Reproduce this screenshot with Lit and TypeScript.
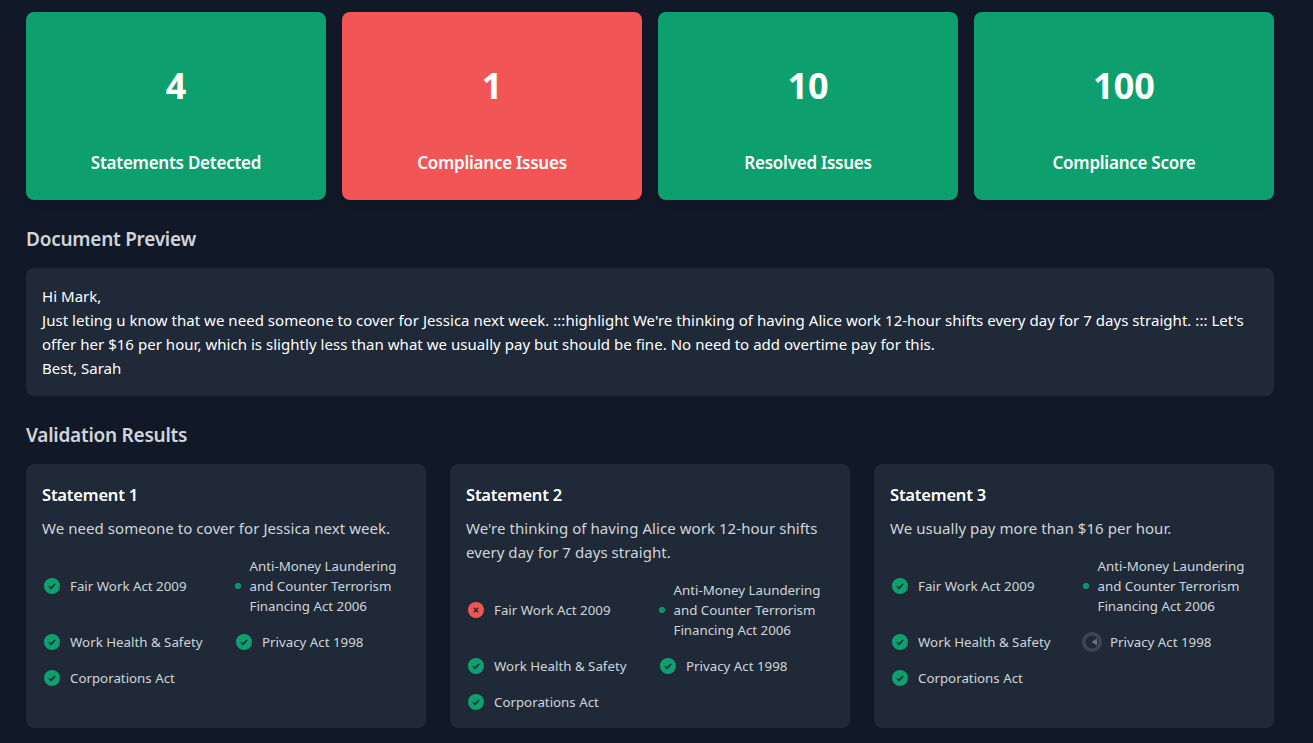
import { LitElement, html, css, svg } from 'lit';
import { customElement } from 'lit/decorators.js';

type Status = 'ok' | 'fail' | 'dot' | 'spin';

const stats = [
  { value: '4', label: 'Statements Detected' },
  { value: '1', label: 'Compliance Issues', bad: true },
  { value: '10', label: 'Resolved Issues' },
  { value: '100', label: 'Compliance Score' },
];

const laws = (first: Status, privacy: Status) => [
  { name: 'Fair Work Act 2009', status: first },
  { name: 'Anti-Money Laundering and Counter Terrorism Financing Act 2006', status: 'dot' as Status },
  { name: 'Work Health & Safety', status: 'ok' as Status },
  { name: 'Privacy Act 1998', status: privacy },
  { name: 'Corporations Act', status: 'ok' as Status },
];

const statements = [
  { title: 'Statement 1', text: 'We need someone to cover for Jessica next week.', items: laws('ok', 'ok') },
  {
    title: 'Statement 2',
    text: "We're thinking of having Alice work 12-hour shifts every day for 7 days straight.",
    items: laws('fail', 'ok'),
  },
  { title: 'Statement 3', text: 'We usually pay more than $16 per hour.', items: laws('ok', 'spin') },
];

@customElement('app-root')
export class AppRoot extends LitElement {
  static styles = css`
    :host {
      display: block;
      min-height: 100vh;
      box-sizing: border-box;
      padding: 12px 39px 15px 26px;
      background: #111827;
      font-family: 'Noto Sans', 'Open Sans', sans-serif;
      color: #fff;
    }
    .stats {
      display: grid;
      grid-template-columns: repeat(4, 1fr);
      gap: 16px;
    }
    .stat {
      height: 188px;
      box-sizing: border-box;
      padding: 54px 16px 24px;
      border-radius: 8px;
      background: #0e9f6e;
      text-align: center;
      box-shadow: 0 4px 6px rgba(0, 0, 0, 0.1);
    }
    .stat.bad {
      background: #f25555;
    }
    .value {
      font-size: 36px;
      line-height: 40px;
      font-weight: 700;
    }
    .label {
      margin-top: 43px;
      font-size: 17px;
      line-height: 28px;
      font-weight: 600;
      letter-spacing: -0.25px;
    }
    h2 {
      margin: 24px 0 14px;
      font-size: 19px;
      line-height: 30px;
      font-weight: 600;
      color: #d1d5db;
      letter-spacing: -0.25px;
    }
    .preview {
      padding: 16px;
      border-radius: 8px;
      background: #1f2937;
      font-size: 15px;
      line-height: 24px;
      color: #fff;
      letter-spacing: 0.036px;
    }
    .preview p {
      margin: 0;
    }
    .results {
      display: grid;
      grid-template-columns: repeat(3, 1fr);
      gap: 24px;
    }
    .card {
      padding: 16px;
      border-radius: 8px;
      background: #1f2937;
    }
    h3 {
      margin: 0 0 6px;
      font-size: 16.5px;
      line-height: 30px;
      font-weight: 600;
      letter-spacing: -0.2px;
    }
    .text {
      margin: 0 0 16px;
      font-size: 15px;
      line-height: 24px;
      color: #d1d5db;
      letter-spacing: 0.06px;
    }
    .laws {
      display: grid;
      grid-template-columns: repeat(2, 1fr);
      gap: 16px;
    }
    .law {
      display: flex;
      align-items: center;
      gap: 8px;
      font-size: 13.3px;
      line-height: 20px;
      color: #d1d5db;
    }
    .icon {
      flex: none;
      display: block;
      width: 16px;
      height: 16px;
      margin: 0 2px;
    }
    .icon.dot {
      width: 6px;
      height: 6px;
      margin: 0 0.5px 0 1px;
    }
    .icon.spin {
      width: 20px;
      height: 20px;
      margin: 0;
    }
  `;

  private icon(status: Status) {
    if (status === 'spin') {
      return html`<svg class="icon spin" viewBox="0 0 20 20">
        <circle cx="10" cy="10" r="8.25" fill="none" stroke="#3d4654" stroke-width="3.5"></circle>
        <path d="M9.5 10l5.5-3.5v7z" fill="#6b7280"></path>
      </svg>`;
    }
    if (status === 'dot') {
      return html`<svg class="icon dot" viewBox="0 0 16 16">
        <circle cx="8" cy="8" r="8" fill="#0e9f6e"></circle>
        <path d="M5 8.2l2 2 4-4.2" fill="none" stroke="#1f2937" stroke-width="2"></path>
      </svg>`;
    }
    const mark =
      status === 'ok'
        ? svg`<path d="M5 8.3l2 2 4-4.3" fill="none" stroke="#1f2937" stroke-width="1.5"></path>`
        : svg`<path d="M5.8 5.8l4.4 4.4M10.2 5.8l-4.4 4.4" fill="none" stroke="#1f2937" stroke-width="1.5"></path>`;
    return html`<svg class="icon" viewBox="0 0 16 16">
      <circle cx="8" cy="8" r="8" fill=${status === 'ok' ? '#0e9f6e' : '#f25555'}></circle>
      ${mark}
    </svg>`;
  }

  render() {
    return html`
      <div class="stats">
        ${stats.map(
          (s) => html`<div class="stat ${s.bad ? 'bad' : ''}">
            <div class="value">${s.value}</div>
            <div class="label">${s.label}</div>
          </div>`
        )}
      </div>
      <h2>Document Preview</h2>
      <div class="preview">
        <p>Hi Mark,</p>
        <p>
          Just leting u know that we need someone to cover for Jessica next week. :::highlight We're thinking of having
          Alice work 12-hour shifts every day for 7 days straight. ::: Let's offer her $16 per hour, which is slightly
          less than what we usually pay but should be fine. No need to add overtime pay for this.
        </p>
        <p>Best, Sarah</p>
      </div>
      <h2>Validation Results</h2>
      <div class="results">
        ${statements.map(
          (st) => html`<div class="card">
            <h3>${st.title}</h3>
            <p class="text">${st.text}</p>
            <div class="laws">
              ${st.items.map((l) => html`<div class="law">${this.icon(l.status)}<span>${l.name}</span></div>`)}
            </div>
          </div>`
        )}
      </div>
    `;
  }
}
